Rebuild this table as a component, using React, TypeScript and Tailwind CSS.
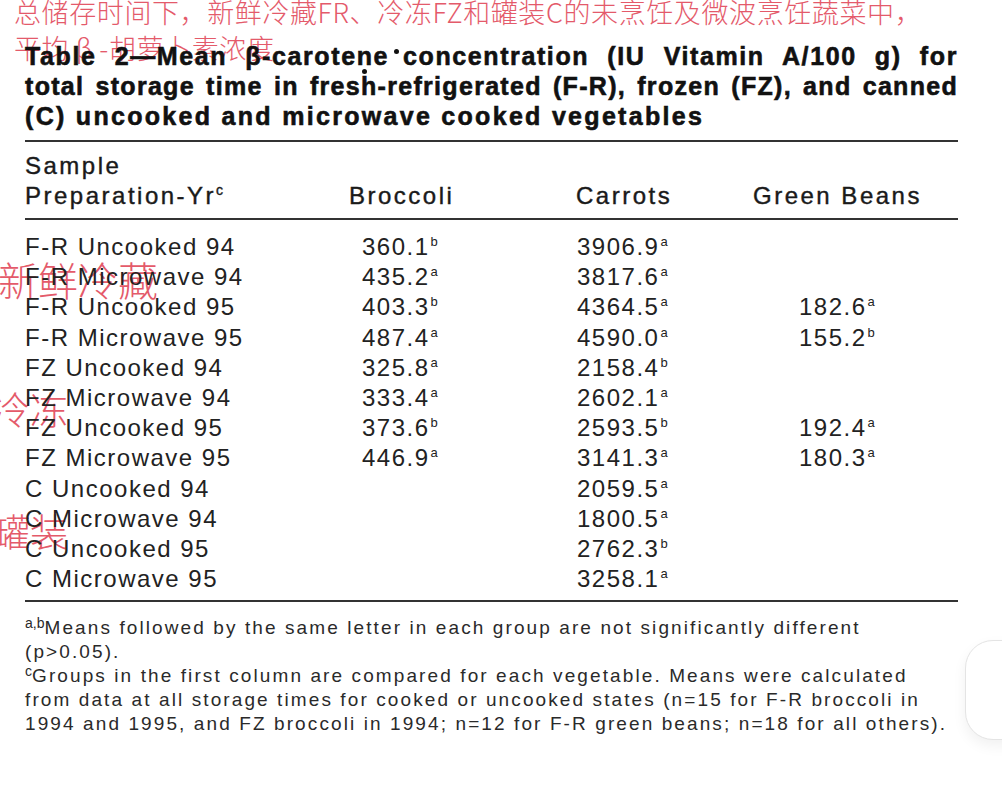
import React from "react";

const rows: [string, string, string, string, string, string, string][] = [
  ["F-R Uncooked 94", "360.1", "b", "3906.9", "a", "", ""],
  ["F-R Microwave 94", "435.2", "a", "3817.6", "a", "", ""],
  ["F-R Uncooked 95", "403.3", "b", "4364.5", "a", "182.6", "a"],
  ["F-R Microwave 95", "487.4", "a", "4590.0", "a", "155.2", "b"],
  ["FZ Uncooked 94", "325.8", "a", "2158.4", "b", "", ""],
  ["FZ Microwave 94", "333.4", "a", "2602.1", "a", "", ""],
  ["FZ Uncooked 95", "373.6", "b", "2593.5", "b", "192.4", "a"],
  ["FZ Microwave 95", "446.9", "a", "3141.3", "a", "180.3", "a"],
  ["C Uncooked 94", "", "", "2059.5", "a", "", ""],
  ["C Microwave 94", "", "", "1800.5", "a", "", ""],
  ["C Uncooked 95", "", "", "2762.3", "b", "", ""],
  ["C Microwave 95", "", "", "3258.1", "a", "", ""],
];

function Val({ v, s }: { v: string; s: string }) {
  if (!v) return <span />;
  return (
    <span>
      {v}
      <sup className="text-[13px] tracking-normal relative top-[-9px] ml-[1px]">{s}</sup>
    </span>
  );
}

export default function App() {
  const red = "text-[#e2495a]";
  return (
    <div
      className="relative w-[1002px] h-[786px] bg-white overflow-hidden"
      style={{ fontFamily: "'Liberation Sans', Arial, sans-serif" }}
    >
      {/* red annotations (behind) */}
      <div
        className={`absolute inset-0 ${red} opacity-90 pointer-events-none`}
        style={{ fontFamily: "'Noto Sans CJK SC', sans-serif" }}
      >
        <div className="absolute left-[14px] top-[-5px] text-[27px] tracking-[0.6px] font-light leading-[34px] whitespace-nowrap">
          总储存时间下，新鲜冷藏FR、冷冻FZ和罐装C的未烹饪及微波烹饪蔬菜中，
        </div>
        <div className="absolute left-[14px] top-[31px] text-[27px] tracking-[0.6px] font-light leading-[34px] whitespace-nowrap">
          平均 β -胡萝卜素浓度
        </div>
        <div className="absolute left-[-2px] top-[255px] text-[40px] font-light leading-[48px] whitespace-nowrap">
          新鲜冷藏
        </div>
        <div className="absolute left-[-8px] top-[385px] text-[38px] font-light leading-[46px] whitespace-nowrap">
          冷冻
        </div>
        <div className="absolute left-[-8px] top-[507px] text-[38px] font-light leading-[46px] whitespace-nowrap">
          罐装
        </div>
      </div>

      <div className="relative pl-[25px] pr-[44px] pt-[41px]">
        {/* title */}
        <div className="text-[25px] font-bold leading-[30px] text-[#111] [-webkit-text-stroke:0.6px_#111]">
          <div className="whitespace-nowrap tracking-[1.6px] text-justify [text-align-last:justify]">
            Table 2—Mean β-carote
            <span className="relative">
              n
              <span className="absolute left-[5px] top-[27px] w-[5px] h-[5px] rounded-full bg-[#111]" />
            </span>
            e<span className="relative inline-block w-[14px]">
              <span className="absolute left-[5px] top-[-16px] w-[5px] h-[5px] rounded-full bg-[#111]" />
            </span>
            concentration (IU Vitamin A/100 g) for
          </div>
          <div className="whitespace-nowrap tracking-[1.3px] text-justify [text-align-last:justify]">
            total storage time in fresh-refrigerated (F-R), frozen (FZ), and canned
          </div>
          <div className="whitespace-nowrap tracking-[2.3px]">(C) uncooked and microwave cooked vegetables</div>
        </div>

        <div className="mt-[9px] h-[2px] bg-[#333]" />

        {/* header */}
        <div className="text-[24px] leading-[30px] text-[#1a1a1a] tracking-[2.5px] [-webkit-text-stroke:0.4px_#1a1a1a] pt-[9px] pb-[7px]">
          <div>Sample</div>
          <div className="flex">
            <div className="w-[324px]">
              Preparation-Yr<sup className="text-[14px] tracking-normal relative top-[-9px]">c</sup>
            </div>
            <div className="w-[227px]">Broccoli</div>
            <div className="w-[177px]">Carrots</div>
            <div>Green Beans</div>
          </div>
        </div>

        <div className="h-[2px] bg-[#333]" />

        {/* rows */}
        <div className="pt-[12px] pb-[6px] text-[24px] leading-[30.2px] text-[#222] tracking-[1.5px]">
          {rows.map((r) => (
            <div key={r[0]} className="flex">
              <div className="w-[337px] whitespace-nowrap">{r[0]}</div>
              <div className="w-[215px]">
                <Val v={r[1]} s={r[2]} />
              </div>
              <div className="w-[222px]">
                <Val v={r[3]} s={r[4]} />
              </div>
              <div>
                <Val v={r[5]} s={r[6]} />
              </div>
            </div>
          ))}
        </div>

        <div className="h-[2px] bg-[#333]" />

        {/* footnotes */}
        <div className="pt-[14px] text-[19px] leading-[24px] text-[#2a2a2a] tracking-[2.1px] whitespace-nowrap">
          <div>
            <sup className="text-[14px] tracking-normal relative top-[-6px]">a,b</sup>Means followed by the same letter in each group are not significantly different
          </div>
          <div>(p&gt;0.05).</div>
          <div>
            <sup className="text-[14px] tracking-normal relative top-[-6px]">c</sup>Groups in the first column are compared for each vegetable. Means were calculated
          </div>
          <div>from data at all storage times for cooked or uncooked states (n=15 for F-R broccoli in</div>
          <div>1994 and 1995, and FZ broccoli in 1994; n=12 for F-R green beans; n=18 for all others).</div>
        </div>
      </div>

      {/* faint floating button edge */}
      <div className="absolute left-[965px] top-[640px] w-[60px] h-[100px] rounded-l-[28px] border border-[#e4e4e4] bg-white shadow-[0_6px_14px_rgba(0,0,0,0.06)]" />
    </div>
  );
}
